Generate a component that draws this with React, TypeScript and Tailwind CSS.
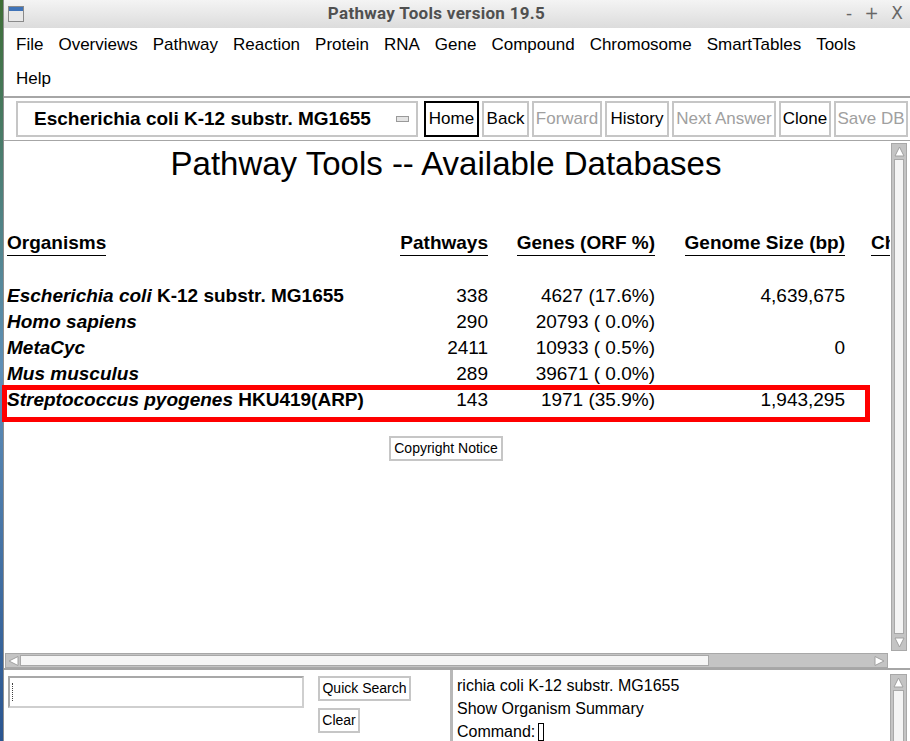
const FONT = "font-[family-name:Liberation_Sans,Arial,sans-serif]";

function UpArrow() {
  return (
    <svg width="13" height="13" viewBox="0 0 13 13">
      <polygon points="6.5,2 11,11 2,11" fill="#ffffff" stroke="#a0a0a0" strokeWidth="1" />
    </svg>
  );
}
function DownArrow() {
  return (
    <svg width="13" height="13" viewBox="0 0 13 13">
      <polygon points="2,2 11,2 6.5,11" fill="#ffffff" stroke="#a0a0a0" strokeWidth="1" />
    </svg>
  );
}
function LeftArrow() {
  return (
    <svg width="13" height="12" viewBox="0 0 13 12">
      <polygon points="2,6 11,1.5 11,10.5" fill="#ffffff" stroke="#a0a0a0" strokeWidth="1" />
    </svg>
  );
}
function RightArrow() {
  return (
    <svg width="13" height="12" viewBox="0 0 13 12">
      <polygon points="11,6 2,1.5 2,10.5" fill="#ffffff" stroke="#a0a0a0" strokeWidth="1" />
    </svg>
  );
}

function Btn({ label, cls }: { label: string; cls: string }) {
  return (
    <div className={`h-[36px] flex items-center justify-center bg-white text-[17px] shrink-0 ${cls}`}>
      {label}
    </div>
  );
}

type Row = { name: React.ReactNode; p: string; g: string; s: string };

const rows: Row[] = [
  {
    name: (
      <>
        <i>Escherichia coli</i> K-12 substr. MG1655
      </>
    ),
    p: "338",
    g: "4627 (17.6%)",
    s: "4,639,675",
  },
  { name: <i>Homo sapiens</i>, p: "290", g: "20793 ( 0.0%)", s: "" },
  { name: <i>MetaCyc</i>, p: "2411", g: "10933 ( 0.5%)", s: "0" },
  { name: <i>Mus musculus</i>, p: "289", g: "39671 ( 0.0%)", s: "" },
  {
    name: (
      <>
        <i>Streptococcus pyogenes</i> HKU419(ARP)
      </>
    ),
    p: "143",
    g: "1971 (35.9%)",
    s: "1,943,295",
  },
];

export default function App() {
  return (
    <div className={`w-[910px] h-[741px] flex overflow-hidden relative ${FONT}`}>
      {/* desktop strip */}
      <div className="w-[3px] h-full shrink-0 bg-gradient-to-b from-[#3f6e35] via-[#5f8fb8] to-[#2a5590]" />
      {/* window */}
      <div className="flex-1 min-w-0 flex flex-col bg-[#d6d6d6] border-l border-[#8f8f8f] overflow-hidden">
        {/* title bar */}
        <div className="h-[28px] shrink-0 flex items-center bg-gradient-to-b from-[#f4f4f4] to-[#dcdcdc]">
          <div className="ml-[4px] w-[16px] h-[16px] flex flex-col border border-[#8a8a8a] bg-[#e8e8e8]">
            <div className="h-[4px] bg-[#3f73b8]" />
          </div>
          <div className="flex-1 min-w-0 text-center pl-[9px] text-[17px] font-bold text-[#505050] font-[family-name:Roboto,sans-serif] tracking-[0.3px]">
            Pathway Tools version 19.5
          </div>
          <div className="w-[70px] shrink-0 flex items-center justify-between pr-[7px] pl-[6px] text-[17px] text-[#666666] font-[family-name:DejaVu_Sans,sans-serif]">
            <span>-</span>
            <span>+</span>
            <span>X</span>
          </div>
        </div>

        {/* menu */}
        <div className="h-[70px] shrink-0 bg-white border-b-2 border-[#a6a6a6] pl-[12px] text-[17px] text-black leading-[34px]">
          <div className="flex gap-x-[15px]">
            {["File", "Overviews", "Pathway", "Reaction", "Protein", "RNA", "Gene", "Compound", "Chromosome", "SmartTables", "Tools"].map((m) => (
              <span key={m}>{m}</span>
            ))}
          </div>
          <div>Help</div>
        </div>

        {/* toolbar */}
        <div className="h-[43px] shrink-0 bg-white border-b border-[#a6a6a6] flex items-center">
          <div className="ml-[12px] w-[402px] h-[36px] shrink-0 border-2 border-[#c6c6c6] flex items-center pl-[16px] pr-[7px]">
            <span className="flex-1 text-[19px] font-bold text-black whitespace-nowrap">
              Escherichia coli K-12 substr. MG1655
            </span>
            <span className="w-[13px] h-[6px] border border-[#9a9a9a] bg-[#e4e4e4]" />
          </div>
          <div className="ml-[6px] flex items-center gap-x-[3px]">
            <Btn label="Home" cls="w-[55px] border-2 border-black text-black" />
            <Btn label="Back" cls="w-[47px] border-2 border-[#c6c6c6] text-black" />
            <Btn label="Forward" cls="w-[70px] border-2 border-[#c6c6c6] text-[#a0a0a0]" />
            <Btn label="History" cls="w-[64px] border-2 border-[#c6c6c6] text-black" />
            <Btn label="Next Answer" cls="w-[104px] border-2 border-[#c6c6c6] text-[#a0a0a0]" />
            <Btn label="Clone" cls="w-[52px] border-2 border-[#c6c6c6] text-black" />
            <Btn label="Save DB" cls="w-[74px] border-2 border-[#c6c6c6] text-[#a0a0a0]" />
          </div>
        </div>

        {/* main area */}
        <div className="h-[512px] shrink-0 flex bg-white min-w-0">
          <div className="ml-[1px] flex-1 min-w-0 bg-white overflow-hidden relative">
            <div className="pt-[4px] pr-[3px] text-[33px] leading-[37px] text-center text-black whitespace-nowrap">
              Pathway Tools -- Available Databases
            </div>
            <div className="mt-[48px] pl-[2px] w-max text-[19px] text-black">
              <div className="grid grid-cols-[364px_91px_141px_164px_60px] gap-x-[26px] font-bold leading-[25px]">
                <div>
                  <span className="inline-block border-b border-black">Organisms</span>
                </div>
                <div className="text-right">
                  <span className="inline-block border-b border-black">Pathways</span>
                </div>
                <div className="text-right">
                  <span className="inline-block border-b border-black">Genes (ORF %)</span>
                </div>
                <div className="text-right">
                  <span className="inline-block border-b border-black">Genome Size (bp)</span>
                </div>
                <div>
                  <span className="inline-block border-b border-black">Chromosomes</span>
                </div>
              </div>
              <div className="mt-[27px] grid grid-cols-[364px_91px_141px_164px_60px] gap-x-[26px] leading-[26px]">
                {rows.map((r, i) => (
                  <div key={i} className="contents">
                    <div className="font-bold whitespace-nowrap">{r.name}</div>
                    <div className="text-right">{r.p}</div>
                    <div className="text-right whitespace-pre">{r.g}</div>
                    <div className="text-right">{r.s}</div>
                    <div />
                  </div>
                ))}
              </div>
            </div>
            <div className="mt-[23px] flex justify-center pr-[3px]">
              <div className="h-[25px] px-[3px] border-2 border-[#c6c6c6] flex items-center text-[14px] text-black bg-white">
                Copyright Notice
              </div>
            </div>
          </div>
          {/* vertical scrollbar */}
          <div className="w-[16px] my-[2px] ml-[1px] mr-[3px] shrink-0 flex flex-col bg-[#c4c4c4] border border-[#a8a8a8]">
            <div className="h-[15px] flex items-center justify-center">
              <UpArrow />
            </div>
            <div className="flex-1 mx-[2px] bg-[#f4f4f4] border border-[#a8a8a8]" />
            <div className="h-[16px] flex items-center justify-center">
              <DownArrow />
            </div>
          </div>
        </div>

        {/* horizontal scrollbar */}
        <div className="h-[15px] shrink-0 flex bg-white">
          <div className="ml-[1px] w-[883px] flex items-stretch bg-[#c4c4c4] border border-[#a8a8a8]">
            <div className="w-[14px] flex items-center justify-center">
              <LeftArrow />
            </div>
            <div className="w-[689px] my-[1px] bg-[#f6f6f6] border border-[#a8a8a8]" />
            <div className="flex-1" />
            <div className="w-[16px] flex items-center justify-center">
              <RightArrow />
            </div>
          </div>
        </div>

        {/* bottom panel */}
        <div className="flex-1 flex border-t-2 border-[#a6a6a6] bg-white min-w-0">
          <div className="w-[446px] shrink-0 flex pl-[4px] pt-[6px]">
            <div className="w-[296px] h-[32px] border-2 border-t-[#a8a8a8] border-l-[#a8a8a8] border-r-[#cfcfcf] border-b-[#cfcfcf] flex items-center pl-[2px]">
              <div className="w-[3px] h-[18px] border-l border-dotted border-[#404040]" />
            </div>
            <div className="ml-[14px] flex flex-col gap-y-[7px]">
              <div className="h-[25px] w-[93px] border-2 border-[#c6c6c6] flex items-center justify-center text-[14px] text-black">
                Quick Search
              </div>
              <div className="h-[25px] w-[42px] border-2 border-[#c6c6c6] flex items-center justify-center text-[14px] text-black">
                Clear
              </div>
            </div>
          </div>
          <div className="w-[3px] bg-[#b8b8b8] shrink-0" />
          <div className="flex-1 min-w-0 pl-[4px] pt-[4px] text-[16px] leading-[23px] text-black whitespace-nowrap overflow-hidden">
            <div>richia coli K-12 substr. MG1655</div>
            <div>Show Organism Summary</div>
            <div className="flex items-center">
              Command:
              <span className="ml-[3px] inline-block w-[6px] h-[18px] border border-black" />
            </div>
          </div>
          <div className="w-[17px] mr-[3px] mt-[4px] shrink-0 bg-[#c4c4c4] border border-[#a8a8a8] flex flex-col">
            <div className="h-[15px] flex items-center justify-center">
              <UpArrow />
            </div>
            <div className="flex-1 mx-[2px] bg-[#f4f4f4] border border-[#a8a8a8]" />
          </div>
        </div>
      </div>

      {/* red highlight annotation */}
      <div className="absolute left-[2px] top-[385px] w-[868px] h-[37px] border-[5px] border-[#ff0000] pointer-events-none" />
    </div>
  );
}
